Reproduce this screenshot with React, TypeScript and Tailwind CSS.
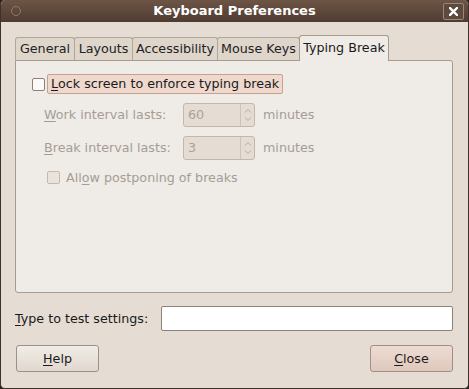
const font = { fontFamily: '"DejaVu Sans", "Liberation Sans", sans-serif' };

const Tab = ({ label, width, active, first }: { label: string; width: string; active?: boolean; first?: boolean }) => (
  <div
    className={`${width} ${first ? "" : "-ml-px"} flex items-center justify-center border border-b-0 rounded-t-[3px] text-[12.7px] ${
      active
        ? "h-[26px] -mb-px relative z-10 bg-[#efebe7] border-[#a89a8d] pb-[2px] text-[#1a1a1a]"
        : "h-[23px] bg-[#ded5cb] border-[#b3a597] text-[#222]"
    }`}
  >
    {label}
  </div>
);

const Spinner = ({ value }: { value: string }) => (
  <div className="w-[72px] h-[24px] flex border border-[#c4b6a9] rounded-[3px] bg-[#e5ddd4]">
    <div className="flex-1 flex items-center pl-[4px] text-[12.7px] text-[#aaa198]">{value}</div>
    <div className="w-[14px] flex flex-col border-l border-[#cfc3b7] items-center justify-center text-[#b3a99f]">
      <svg width="8" height="5" viewBox="0 0 8 5" className="mb-[4px]">
        <path d="M1 4.5 L4 1.5 L7 4.5" fill="none" stroke="currentColor" strokeWidth="1" />
      </svg>
      <svg width="8" height="5" viewBox="0 0 8 5">
        <path d="M1 0.5 L4 3.5 L7 0.5" fill="none" stroke="currentColor" strokeWidth="1" />
      </svg>
    </div>
  </div>
);

const Button = ({ children, pink }: { children: React.ReactNode; pink?: boolean }) => (
  <div
    className={`w-[83px] h-[27px] flex items-center justify-center border border-[#9e9085] rounded-[3px] text-[12.7px] text-[#1a1a1a] ${
      pink ? "bg-gradient-to-b from-[#eddcd3] to-[#dfc8bc]" : "bg-gradient-to-b from-[#f1ece7] to-[#e1d8cf]"
    }`}
  >
    {children}
  </div>
);

export default function App() {
  return (
    <div className="w-[469px] h-[389px] bg-[#2b231d]" style={font}>
      <div className="w-full h-full flex flex-col rounded-[5px] overflow-hidden border-x border-b border-[#3e3129] bg-[#e5ddd4]">
        {/* title bar */}
        <div className="h-[22px] shrink-0 relative flex items-center justify-center bg-gradient-to-b from-[#6d5546] to-[#4f3c31] -mx-px">
          <div className="absolute left-[11px] top-[6px] w-[10px] h-[10px] rounded-full border border-[#8d7a6c]" />
          <span className="text-[13px] font-bold text-white">Keyboard Preferences</span>
          <div className="absolute right-[5px] top-[3px] w-[21px] h-[17px] flex items-center justify-center border border-[#9a8779] rounded-[2px] bg-[#5e4a3d]">
            <svg width="9" height="9" viewBox="0 0 9 9">
              <path d="M1 1 L8 8 M8 1 L1 8" stroke="white" strokeWidth="2.4" strokeLinecap="square" />
            </svg>
          </div>
        </div>

        <div className="flex-1 flex flex-col pl-[14px] pr-[15px] pt-[13px]">
          {/* tabs */}
          <div className="flex items-end">
            <Tab label="General" width="w-[60px]" first />
            <Tab label="Layouts" width="w-[59px]" />
            <Tab label="Accessibility" width="w-[86px]" />
            <Tab label="Mouse Keys" width="w-[83px]" />
            <Tab label="Typing Break" width="w-[90px]" active />
          </div>

          {/* panel */}
          <div className="h-[233px] border border-[#a89a8d] rounded-b-[3px] rounded-tr-[3px] bg-[#efebe7] pl-[16px] pt-[13px]">
            <div className="flex items-center">
              <div className="w-[13px] h-[13px] border border-[#8c7f75] rounded-[2px] bg-[#fbfaf9]" />
              <div className="ml-[2px] h-[20px] flex items-center px-[3px] border border-[#c9a08e] rounded-[2px] bg-[#efd9ce] text-[12.7px] text-[#1a1a1a]">
                <span className="underline underline-offset-2">L</span>ock screen to enforce typing break
              </div>
            </div>

            <div className="pl-[12px] text-[12.7px] text-[#a59d95]">
              <div className="flex items-center mt-[9px] h-[24px]">
                <div className="w-[139px]">
                  <span className="underline underline-offset-2">W</span>ork interval lasts:
                </div>
                <Spinner value="60" />
                <span className="ml-[8px]">minutes</span>
              </div>
              <div className="flex items-center mt-[9px] h-[24px]">
                <div className="w-[139px]">
                  <span className="underline underline-offset-2">B</span>reak interval lasts:
                </div>
                <Spinner value="3" />
                <span className="ml-[8px]">minutes</span>
              </div>
              <div className="flex items-center mt-[8px] pl-[3px]">
                <div className="w-[13px] h-[13px] border border-[#c6bab0] rounded-[2px] bg-[#e9e3dc]" />
                <span className="ml-[6px]">
                  All<span className="underline underline-offset-2">o</span>w postponing of breaks
                </span>
              </div>
            </div>
          </div>

          {/* test row */}
          <div className="flex items-center mt-[13px]">
            <div className="w-[146px] text-[12.7px] text-[#1a1a1a]">
              <span className="underline underline-offset-2">T</span>ype to test settings:
            </div>
            <div className="flex-1 h-[25px] bg-white border border-[#8e8177] rounded-[2px]" />
          </div>

          {/* buttons */}
          <div className="flex justify-between mt-[14px] pl-[1px]">
            <Button>
              <span className="underline underline-offset-2">H</span>elp
            </Button>
            <Button pink>
              <span className="underline underline-offset-2">C</span>lose
            </Button>
          </div>
        </div>
      </div>
    </div>
  );
}
